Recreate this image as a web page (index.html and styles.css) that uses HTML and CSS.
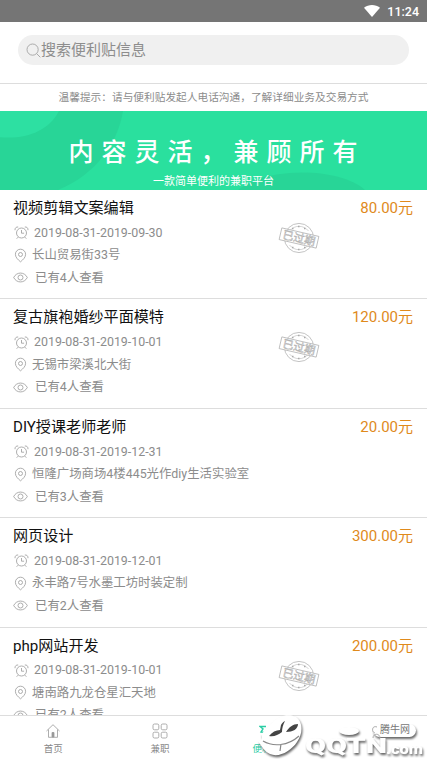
FILE: index.html
```html
<!DOCTYPE html>
<html lang="zh-CN">
<head>
<meta charset="utf-8">
<title>便利贴</title>
<link rel="stylesheet" href="styles.css">
</head>
<body>
<svg class="defs" aria-hidden="true">
  <symbol id="clock" viewBox="0 0 15 15"><circle cx="7.5" cy="8" r="5"/><path d="M7.5 5v3.2h2.6M1 5.2C.8 3 2.3 1.7 4.2 2M14 5.2c.2-2.2-1.3-3.5-3.2-3.2M4 12.2l-1.3 1.5M11 12.2l1.3 1.5"/></symbol>
  <symbol id="pin" viewBox="0 0 15 15"><path d="M7.5 13.8C4.8 11.6 2.4 9.3 2.4 6.3a5.1 5.1 0 0 1 10.2 0c0 3-2.4 5.3-5.1 7.5z"/><circle cx="7.5" cy="6.5" r="2"/></symbol>
  <symbol id="eye" viewBox="0 0 15 15"><path d="M.7 7.5C3.5 1.6 11.500 1.600 14.300 7.500 11.500 13.400 3.500 13.400.7 7.500z"/><circle cx="7.500" cy="7.500" r="2.500"/></symbol>
  <symbol id="stamp" viewBox="0 0 42 32">
    <circle cx="21" cy="16" r="14.600"/>
    <path d="M11.500 9a12 12 0 0 1 19 0M11.500 23a12 12 0 0 0 19 0" stroke-width=".5"/>
    <path d="M14 6.500h1.500M20 4.500h1.500M26 6.500h1.500M14 25.500h1.500M20 27.500h1.500M26 25.500h1.500" stroke-width="1.300"/>
    <g transform="rotate(13 21 16)"><path class="stamp-plate" d="M2 10h38v12H2z"/><text class="stamp-text" x="21" y="20" text-anchor="middle">已过期</text></g>
  </symbol>
</svg>
<div class="app">
  <header class="status">
    <svg class="wifi" viewBox="0 0 16 12"><path d="M0 2.800C4.500-.9 11.500-.9 16 2.800L8 12z"/></svg>
    <span>11:24</span>
  </header>
  <div class="search-bar">
    <div class="search">
      <svg class="search-icon" viewBox="0 0 15 15"><circle cx="6.600" cy="6.600" r="5.600"/><path d="M10.800 10.800l3.500 3.500"/></svg>
      <span>搜索便利贴信息</span>
    </div>
  </div>
  <p class="notice">温馨提示：请与便利贴发起人电话沟通，了解详细业务及交易方式</p>
  <section class="banner">
    <svg class="banner-art" viewBox="0 0 427 78" preserveAspectRatio="none">
      <path fill="#28d597" d="M0 0h123c-5 31-26 62-65 78H0z"/>
      <path fill="#2de0a2" d="M0 0h59C49 19 28 28 0 26z"/>
      <path fill="#28d597" d="M238 78c25-22 100-24 127 0z"/>
    </svg>
    <h1>内容灵活，兼顾所有</h1>
    <p>一款简单便利的兼职平台</p>
  </section>
  <main class="list">
    <article class="item">
      <div class="head"><h2>视频剪辑文案编辑</h2><b>80.00元</b></div>
      <div class="row date"><svg><use href="#clock"/></svg>2019-08-31-2019-09-30</div>
      <div class="row place"><svg><use href="#pin"/></svg>长山贸易街33号</div>
      <div class="row views"><svg><use href="#eye"/></svg>已有4人查看</div>
      <svg class="stamp"><use href="#stamp"/></svg>
    </article>
    <article class="item">
      <div class="head"><h2>复古旗袍婚纱平面模特</h2><b>120.00元</b></div>
      <div class="row date"><svg><use href="#clock"/></svg>2019-08-31-2019-10-01</div>
      <div class="row place"><svg><use href="#pin"/></svg>无锡市梁溪北大街</div>
      <div class="row views"><svg><use href="#eye"/></svg>已有4人查看</div>
      <svg class="stamp"><use href="#stamp"/></svg>
    </article>
    <article class="item">
      <div class="head"><h2>DIY授课老师老师</h2><b>20.00元</b></div>
      <div class="row date"><svg><use href="#clock"/></svg>2019-08-31-2019-12-31</div>
      <div class="row place"><svg><use href="#pin"/></svg>恒隆广场商场4楼445光作diy生活实验室</div>
      <div class="row views"><svg><use href="#eye"/></svg>已有3人查看</div>
    </article>
    <article class="item">
      <div class="head"><h2>网页设计</h2><b>300.00元</b></div>
      <div class="row date"><svg><use href="#clock"/></svg>2019-08-31-2019-12-01</div>
      <div class="row place"><svg><use href="#pin"/></svg>永丰路7号水墨工坊时装定制</div>
      <div class="row views"><svg><use href="#eye"/></svg>已有2人查看</div>
    </article>
    <article class="item">
      <div class="head"><h2>php网站开发</h2><b>200.00元</b></div>
      <div class="row date"><svg><use href="#clock"/></svg>2019-08-31-2019-10-01</div>
      <div class="row place"><svg><use href="#pin"/></svg>塘南路九龙仓星汇天地</div>
      <div class="row views"><svg><use href="#eye"/></svg>已有2人查看</div>
      <svg class="stamp"><use href="#stamp"/></svg>
    </article>
  </main>
  <nav class="tabs">
    <div class="tab"><svg viewBox="0 0 16 16"><path d="M1.500 8L8 1.700 14.500 8M3.500 6.500v7.800h9V6.500"/><path d="M7 14V9.500h2V14z" fill="#999"/></svg><span>首页</span></div>
    <div class="tab"><svg viewBox="0 0 16 16"><rect x="1" y="1" width="5.800" height="5.800" rx="1.500"/><rect x="9.200" y="1" width="5.800" height="5.800" rx="1.500"/><rect x="1" y="9.200" width="5.800" height="5.800" rx="1.500"/><rect x="9.200" y="9.200" width="5.800" height="5.800" rx="1.500"/></svg><span>兼职</span></div>
    <div class="tab active"><svg viewBox="0 0 16 16"><path d="M7 3.500H1l3 2.500-2 3 5 1v4"/></svg><span>便利贴</span></div>
    <div class="tab"></div>
  </nav>
  <svg class="mark" viewBox="0 0 175 47">
    <g class="raised">
      <path d="M9 22C14 19 19 9 28 5c7-3 16-2 19 3 4 6 3 15-2 22-6 9-18 16-27 12-5-2-8-7-12-13 4 0 5-3 3-7z"/>
      <rect x="121" y="12" width="43" height="13" rx="6.500"/>
      <ellipse cx="97" cy="19" rx="10" ry="4"/>
      <text class="brand" x="53" y="41" textLength="82" lengthAdjust="spacingAndGlyphs">QQTN</text>
      <text class="com" x="134" y="42" textLength="37" lengthAdjust="spacingAndGlyphs">.com</text>
    </g>
    <path class="face" d="M17 24c3-4 7-6 11-6l1-5c1-2 2-3 4-4-2 4-3 7-3 11-4 3-8 5-13 4zM34 20c3-5 7-8 12-8 0 5-5 8-12 8z"/>
    <path class="smile" d="M11 29c10 6 25 5 36-5M29 32l-1 7"/>
    <path class="person" d="M125 15c-5-2-6 5-2 6M121 26c0-5 7-5 7 0"/>
    <text class="cn" x="128" y="21">腾牛网</text>
  </svg>
</div>
</body>
</html>
```
FILE: styles.css
```css
* { box-sizing: border-box; }
body { margin: 0; background: #fff; font-family: Roboto, "Noto Sans CJK SC", sans-serif; }
h1, h2, p { margin: 0; font-weight: 400; }
svg { display: block; fill: none; stroke: #999; stroke-width: .8; flex: none; }
.defs { position: absolute; width: 0; height: 0; }
.app { position: relative; width: 427px; height: 759px; display: flex; flex-direction: column; overflow: hidden; }
.status { height: 22px; flex: none; background: #757575; color: #fff; display: flex; align-items: center; justify-content: flex-end; gap: 7px; padding-right: 8px; font-size: 12.5px; font-weight: 500; }
.wifi { width: 16px; height: 12px; fill: #fff; stroke: none; }
.search-bar { height: 62px; flex: none; padding: 13px 18px 0; border-bottom: 1px solid #ddd; }
.search { height: 30px; border-radius: 15px; background: #f0f0f0; display: flex; align-items: center; padding-left: 8px; color: #8d8d8d; font-size: 15px; line-height: 30px; }
.search-icon { width: 15px; height: 15px; }
.notice { height: 27px; flex: none; line-height: 27px; text-align: center; font-size: 10.7px; color: #8c8c8c; white-space: nowrap; }
.banner { height: 79px; flex: none; position: relative; background: #2ae09e; color: #fff; text-align: center; }
.banner-art { position: absolute; inset: 0; width: 427px; height: 79px; stroke: none; }
.banner h1 { position: relative; height: 62px; padding: 23px 0 0 7px; line-height: 38px; font-size: 25px; font-weight: 500; letter-spacing: 8px; white-space: nowrap; }
.banner p { position: relative; font-size: 11px; line-height: 18px; }
.list { flex: 1; min-height: 0; overflow: hidden; }
.item { position: relative; height: 109.4px; padding: 6px 14px 0 13px; border-bottom: 1px solid #ddd; }
.head { display: flex; justify-content: space-between; height: 25.5px; line-height: 24px; color: #111; font-size: 15.1px; }
.head h2 { font-size: inherit; }
.head b { font-size: 15px; line-height: 25px; font-weight: 400; color: #e08a1c; }
.row { height: 22.5px; display: flex; align-items: center; font-size: 12.4px; line-height: 22px; color: #8c8c8c; }
.row svg { width: 15px; height: 15px; }
.date { gap: 5px; padding-left: 1px; }
.place { gap: 4px; }
.views { gap: 7px; }
.item .stamp { position: absolute; left: 278px; top: 32px; width: 42px; height: 32px; stroke: #aaa; stroke-width: .7; }
.stamp-plate { fill: #fff; }
.stamp-text { font-size: 11px; fill: #fff; stroke: #aaa; stroke-width: .5; }
.tabs { height: 44px; flex: none; display: flex; border-top: 1px solid #ddd; background: #fff; }
.tab { flex: 1; display: flex; flex-direction: column; align-items: center; padding-top: 7px; color: #888; font-size: 9.5px; line-height: 15px; gap: 2px; }
.tab svg { width: 16px; height: 16px; }
.active { color: #2bcda5; }
.active svg { stroke: #2bcda5; stroke-width: 1.4; }
.mark { position: absolute; right: 0; bottom: 0; width: 175px; height: 47px; stroke: none; fill: #fff; }
.raised { filter: drop-shadow(1.5px 2px 1px #666); }
.brand { font: 900 21px Roboto, sans-serif; }
.com { font: 900 15px Roboto, sans-serif; }
.face { fill: #444; }
.smile { fill: none; stroke: #888; stroke-width: 1.2; }
.person { fill: none; stroke: #aaa; stroke-width: 1; }
.cn { font-size: 10px; fill: #777; }
```
